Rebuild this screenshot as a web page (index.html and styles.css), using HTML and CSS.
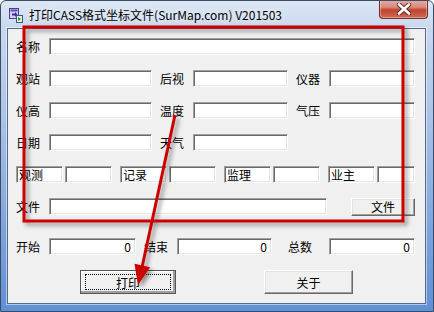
FILE: index.html
```html
<!DOCTYPE html>
<html lang="zh-CN">
<head>
    <meta charset="UTF-8">
    <title>打印CASS格式坐标文件</title>
    <link rel="stylesheet" href="styles.css">
</head>
<body>

    <div class="window">
        <div class="titlebar">
            <svg class="app-icon" width="14" height="15" viewBox="0 0 14 15">
                <rect x="0.5" y="0.5" width="9" height="10" fill="#d8d0f0" stroke="#4a3a9a"/>
                <rect x="1.5" y="1.5" width="7" height="2" fill="#5a4ab0"/>
                <path d="M3 5.5h3v-1.5l2.5 2.5-2.5 2.5v-1.5h-3z" fill="#3a2a8a"/>
                <rect x="7.5" y="7.5" width="6" height="7" fill="#e8f0e0" stroke="#3a5a8a"/>
                <path d="M9 9v4l3-2z" fill="#1c9a2a"/>
            </svg>
            <span class="title">打印CASS格式坐标文件(SurMap.com) V201503</span>
            <div class="close-btn">
                <svg width="14" height="12" viewBox="0 0 14 12">
                    <path d="M2 1.5l10 9M12 1.5l-10 9" stroke="#5a2a28" stroke-width="4.5" stroke-linecap="round"/>
                    <path d="M2 1.5l10 9M12 1.5l-10 9" stroke="#fff" stroke-width="2.6" stroke-linecap="round"/>
                </svg>
            </div>
        </div>

        <div class="client">
            <div class="row">
                <label class="lbl">名称</label>
                <input class="field" type="text">
            </div>

            <div class="row">
                <label class="lbl">观站</label>
                <input class="field w103" type="text">
                <label class="lbl gap8">后视</label>
                <input class="field w95" type="text">
                <label class="lbl gap8">仪器</label>
                <input class="field w86" type="text">
            </div>

            <div class="row">
                <label class="lbl">仪高</label>
                <input class="field w103" type="text">
                <label class="lbl gap8">温度</label>
                <input class="field w95" type="text">
                <label class="lbl gap8">气压</label>
                <input class="field w86" type="text">
            </div>

            <div class="row">
                <label class="lbl">日期</label>
                <input class="field w103" type="text">
                <label class="lbl gap8">天气</label>
                <input class="field w95" type="text">
            </div>

            <div class="row">
                <span class="box-lbl">观测</span>
                <input class="field w47 gap2" type="text">
                <span class="box-lbl gap8">记录</span>
                <input class="field w47 gap2" type="text">
                <span class="box-lbl gap8">监理</span>
                <input class="field w47 gap2" type="text">
                <span class="box-lbl gap8">业主</span>
                <input class="field w38 gap2" type="text">
            </div>

            <div class="row">
                <label class="lbl">文件</label>
                <input class="field w278" type="text">
                <button class="btn file-btn">文件</button>
            </div>

            <div class="row row-count">
                <label class="lbl">开始</label>
                <input class="field num w87" type="text" value="0">
                <label class="lbl gap8">结束</label>
                <input class="field num w95" type="text" value="0">
                <label class="lbl lbl-wide">总数</label>
                <input class="field num w86" type="text" value="0">
            </div>

            <div class="actions">
                <button class="btn btn-default"><span class="focus-rect">打印</span></button>
                <button class="btn btn-about">关于</button>
            </div>
        </div>

        <!-- annotation drawn over the dialog -->
        <svg class="markup" width="434" height="312" viewBox="0 0 434 312">
            <defs>
                <filter id="shadow" x="-10%" y="-10%" width="120%" height="120%">
                    <feDropShadow dx="3" dy="3" stdDeviation="2.2" flood-color="#000" flood-opacity="0.4"/>
                </filter>
            </defs>
            <g filter="url(#shadow)">
                <rect x="24" y="27" width="379" height="194" fill="none" stroke="#cc0000" stroke-width="3"/>
                <line x1="175" y1="115" x2="142.3" y2="266" stroke="#cc0000" stroke-width="3"/>
                <polygon points="138,285 150.1,267.2 134.5,263.8" fill="#cc0000"/>
            </g>
        </svg>
    </div>

</body>
</html>
```

FILE: styles.css
```css
/* Page */
body {
    margin: 0;
    padding: 0;
    background: #fff;
    font-family: "Noto Sans CJK SC", "DejaVu Sans", sans-serif;
    font-size: 12px;
    color: #000;
}

/* Window frame */
.window {
    position: relative;
    width: 434px;
    height: 312px;
    box-sizing: border-box;
    border: 1px solid #3c4c66;
    border-radius: 6px 6px 0 0;
    background: linear-gradient(#dde7f4 0, #c8d8ee 28px, #a9c2e6 120px, #7da3dc 230px, #5f8fd4 312px);
    overflow: hidden;
}

/* Title bar */
.titlebar {
    height: 27px;
    display: flex;
    align-items: flex-start;
    padding-left: 8px;
}

.app-icon {
    margin-top: 7px;
    flex: none;
}

.title {
    margin-left: 6px;
    margin-top: 5px;
    line-height: 18px;
    font-size: 12px;
    white-space: nowrap;
    text-shadow: 0 0 6px rgba(255, 255, 255, 0.9);
}

.close-btn {
    margin-left: auto;
    margin-right: 5px;
    margin-top: -1px;
    width: 49px;
    height: 19px;
    box-sizing: border-box;
    border: 1px solid #6e2e2a;
    border-top: none;
    border-radius: 0 0 4px 4px;
    background: linear-gradient(#e6ada3 0, #d88a7c 40%, #c2422e 55%, #cf6a55 100%);
    box-shadow: inset 0 0 0 1px rgba(255, 255, 255, 0.35);
    display: flex;
    align-items: center;
    justify-content: center;
}

/* Client area */
.client {
    margin: 0 7px 0 6px;
    height: 276px;
    box-sizing: border-box;
    border: 1px solid #56698a;
    box-shadow: 0 0 0 1px rgba(255, 255, 255, 0.5);
    background: #f0f0f0;
    padding: 9px 10px 0 8px;
}

.row {
    display: flex;
    align-items: center;
    height: 17px;
    margin-bottom: 15px;
}

.row-count {
    margin-top: 23px;
    margin-bottom: 15px;
}

/* Labels */
.lbl {
    width: 33px;
    flex: none;
    line-height: 17px;
    white-space: nowrap;
}

.lbl-wide {
    width: 41px;
    margin-left: 16px;
}

.box-lbl {
    width: 47px;
    height: 17px;
    flex: none;
    box-sizing: border-box;
    border: 1px solid;
    border-color: #a0a0a0 #fff #fff #a0a0a0;
    box-shadow: inset 1px 1px 0 #696969, inset -1px -1px 0 #e3e3e3;
    background: #fff;
    padding-left: 2px;
    line-height: 15px;
}

/* Input fields */
.field {
    flex: 1;
    min-width: 0;
    height: 17px;
    margin: 0;
    box-sizing: border-box;
    border: 1px solid;
    border-color: #a0a0a0 #fff #fff #a0a0a0;
    box-shadow: inset 1px 1px 0 #696969, inset -1px -1px 0 #e3e3e3;
    background: #fff;
    padding: 0 4px;
    font-family: inherit;
    font-size: 12px;
    outline: none;
}

.num {
    text-align: right;
}

.w103 { flex: none; width: 103px; }
.w95 { flex: none; width: 95px; }
.w87 { flex: none; width: 87px; }
.w86 { flex: none; width: 86px; }
.w47 { flex: none; width: 47px; }
.w38 { flex: none; width: 38px; }
.w278 { flex: none; width: 278px; }

.gap8 { margin-left: 8px; }
.gap2 { margin-left: 2px; }

/* Buttons */
.btn {
    margin: 0;
    padding: 0;
    box-sizing: border-box;
    background: #f0f0f0;
    border: 1px solid;
    border-color: #fff #696969 #696969 #fff;
    box-shadow: inset -1px -1px 0 #a0a0a0, inset 1px 1px 0 #e3e3e3;
    font-family: inherit;
    font-size: 12px;
    color: #000;
}

.file-btn {
    margin-left: 24px;
    width: 64px;
    height: 18px;
    line-height: 14px;
}

.actions {
    display: flex;
    padding-left: 64px;
}

.btn-default {
    width: 96px;
    height: 24px;
    outline: 1px solid #555;
    outline-offset: -1px;
    border-color: #fff #696969 #696969 #fff;
    box-shadow: inset -2px -2px 0 #a0a0a0, inset 1px 1px 0 #fff;
    padding: 3px 4px;
}

.focus-rect {
    display: block;
    height: 100%;
    box-sizing: border-box;
    border: 1px dotted #000;
    line-height: 16px;
}

.btn-about {
    margin-left: 88px;
    width: 89px;
    height: 24px;
}

/* Red annotation overlay */
.markup {
    position: absolute;
    left: -1px;
    top: -1px;
    pointer-events: none;
}
```
